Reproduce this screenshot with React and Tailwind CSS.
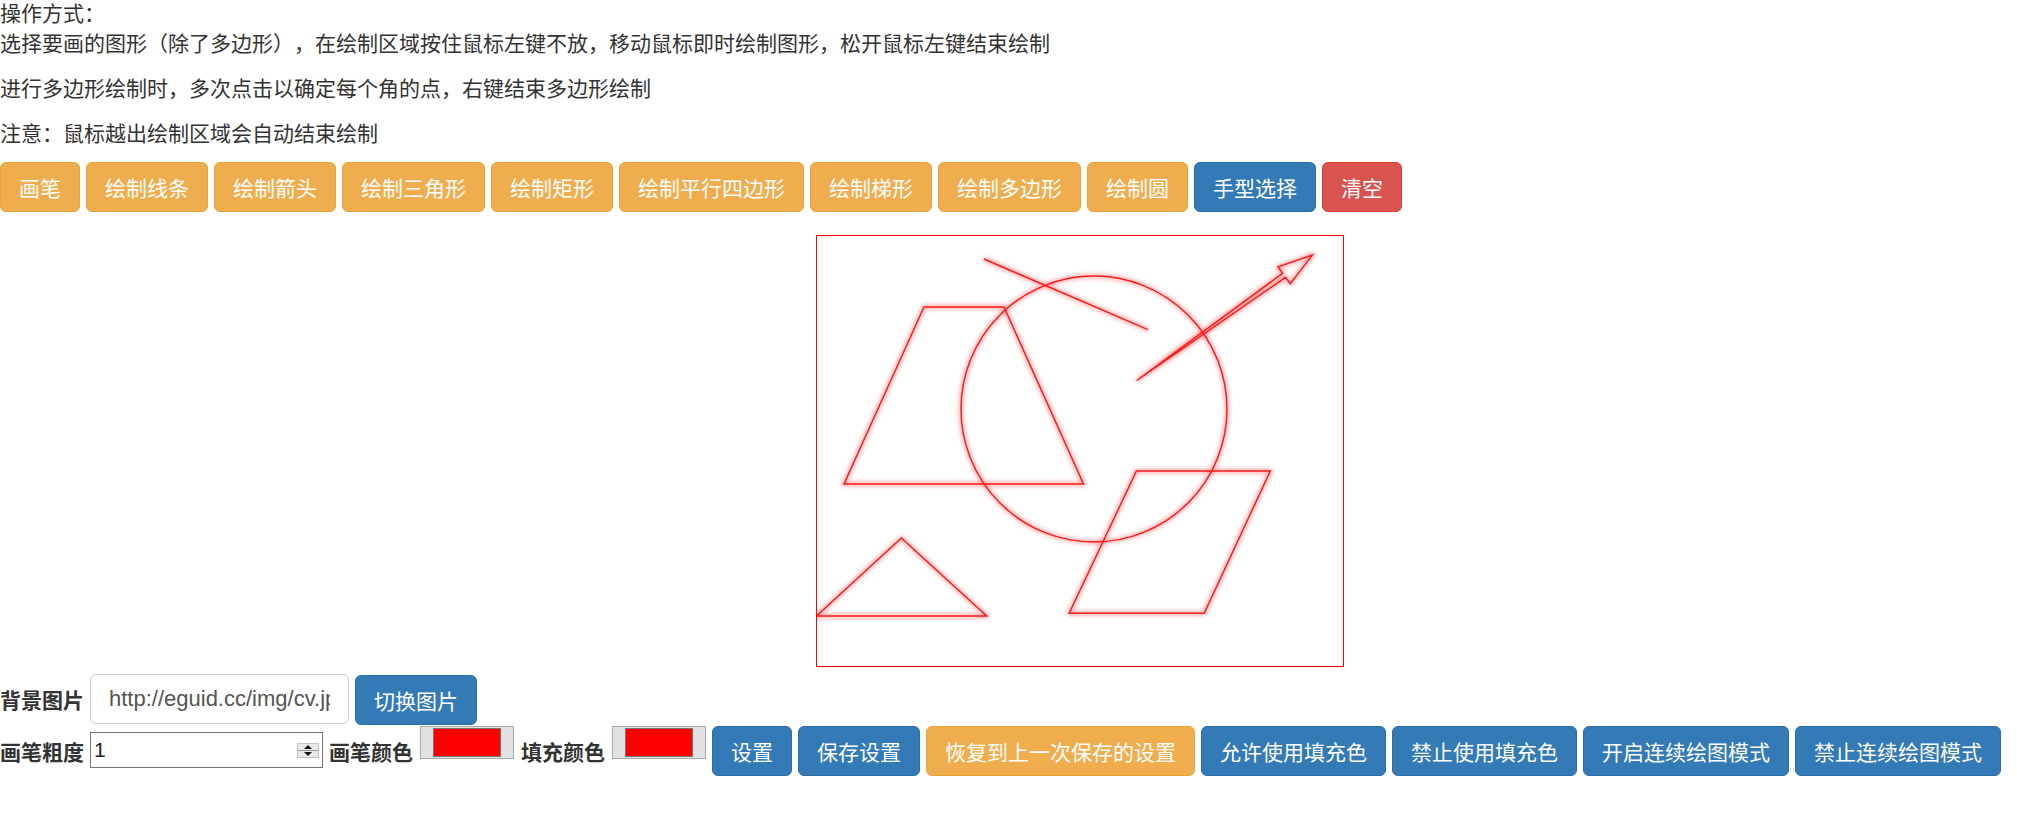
import React from 'react';

const cjk = "font-['Noto_Sans_CJK_SC','Microsoft_YaHei',sans-serif]";

const Btn = ({ children, color = 'primary' }) => {
  const tone =
    color === 'warning'
      ? 'bg-[#f0ad4e] border-[#eea236]'
      : color === 'danger'
      ? 'bg-[#d9534f] border-[#d43f3a]'
      : 'bg-[#337ab7] border-[#2e6da4]';
  return (
    <button
      className={`h-[50px] shrink-0 px-[18px] border rounded-[6px] text-white text-[21px] leading-[30px] whitespace-nowrap ${cjk} ${tone}`}
    >
      {children}
    </button>
  );
};

const ColorBox = () => (
  <div className="w-[94px] h-[33px] shrink-0 bg-[#e1e1e1] border border-[#a9a9a9] flex items-center justify-center">
    <div className="w-[68px] h-[29px] border border-[#777] bg-[#ff0000]" />
  </div>
);

const Label = ({ children, className = '' }) => (
  <span className={`h-[50px] leading-[50px] text-[21px] font-bold text-[#333] whitespace-nowrap shrink-0 ${cjk} ${className}`}>
    {children}
  </span>
);

const tools = [
  '画笔', '绘制线条', '绘制箭头', '绘制三角形', '绘制矩形',
  '绘制平行四边形', '绘制梯形', '绘制多边形', '绘制圆',
];

const DrawingBoard = () => (
  <div className="ml-[816px] mt-[23px] w-[528px] h-[432px] border border-[#ff0000]">
    <svg width="526" height="430" viewBox="1 1 526 430">
      <defs>
        <filter id="glow" x="-20%" y="-20%" width="140%" height="140%">
          <feGaussianBlur in="SourceGraphic" stdDeviation="2.5" result="b" />
          <feMerge>
            <feMergeNode in="b" />
            <feMergeNode in="SourceGraphic" />
          </feMerge>
        </filter>
      </defs>
      <g fill="none" stroke="#ff1a1a" strokeWidth="1.5" filter="url(#glow)">
        <line x1="168" y1="24" x2="332" y2="94.6" />
        <circle cx="278" cy="174" r="133" />
        <polygon points="108,72 188,72 267.5,249 28,249" />
        <polygon points="320.7,145.5 466.6,38.3 462,31.8 496.4,20.1 474.2,48.8 469.6,42.3" />
        <polygon points="85.4,303 170.7,381 0.5,381" />
        <polygon points="320.4,236 454.3,236 388.2,378.3 253.2,378.3" />
      </g>
    </svg>
  </div>
);

const App = () => {
  return (
    <div className="w-[2017px] min-h-[813px] bg-white text-[#333]">
      <div className={`text-[21px] leading-[30px] -mt-[3px] [text-spacing-trim:space-all] ${cjk}`}>
        <div>操作方式：</div>
        <p className="mb-[15px]">选择要画的图形（除了多边形），在绘制区域按住鼠标左键不放，移动鼠标即时绘制图形，松开鼠标左键结束绘制</p>
        <p className="mb-[15px]">进行多边形绘制时，多次点击以确定每个角的点，右键结束多边形绘制</p>
        <p className="mb-[15px]">注意：鼠标越出绘制区域会自动结束绘制</p>
      </div>

      <div className="flex gap-[6px]">
        {tools.map((t) => (
          <Btn key={t} color="warning">{t}</Btn>
        ))}
        <Btn>手型选择</Btn>
        <Btn color="danger">清空</Btn>
      </div>

      <DrawingBoard />

      <div className="mt-[7px] flex items-start">
        <Label className="w-[90px]">背景图片</Label>
        <div className="w-[259px] h-[50px] shrink-0 border border-[#ccc] rounded-[6px] pl-[18px] pr-[18px]">
          <div className="h-full overflow-hidden whitespace-nowrap text-[22px] leading-[48px] text-[#555] font-['Liberation_Sans',Arial,sans-serif]">
            http://eguid.cc/img/cv.jpg
          </div>
        </div>
        <div className="ml-[6px] mt-[1px]">
          <Btn>切换图片</Btn>
        </div>
      </div>

      <div className="mt-[1px] flex items-start">
        <Label className="w-[90px]">画笔粗度</Label>
        <div className="mt-[6px] w-[233px] h-[36px] shrink-0 border border-[#767676] bg-white flex items-center justify-between pl-[3px] pr-[3px]">
          <span className="text-[21px] text-[#222] font-['Liberation_Sans',Arial,sans-serif]">1</span>
          <svg width="22" height="15" viewBox="0 0 22 15">
            <rect x="0.5" y="0.5" width="21" height="14" fill="#e9e9e9" stroke="#c4c4c4" />
            <line x1="1" y1="7.5" x2="21" y2="7.5" stroke="#9a9a9a" />
            <polygon points="7,6 15,6 11,2" fill="#111" />
            <polygon points="7,9 15,9 11,13" fill="#111" />
          </svg>
        </div>
        <Label className="ml-[6px]">画笔颜色</Label>
        <div className="ml-[7px]">
          <ColorBox />
        </div>
        <Label className="ml-[7px]">填充颜色</Label>
        <div className="ml-[7px]">
          <ColorBox />
        </div>
        <div className="ml-[6px] flex gap-[6px]">
          <Btn>设置</Btn>
          <Btn>保存设置</Btn>
          <Btn color="warning">恢复到上一次保存的设置</Btn>
          <Btn>允许使用填充色</Btn>
          <Btn>禁止使用填充色</Btn>
          <Btn>开启连续绘图模式</Btn>
          <Btn>禁止连续绘图模式</Btn>
        </div>
      </div>
    </div>
  );
};

export default App;
